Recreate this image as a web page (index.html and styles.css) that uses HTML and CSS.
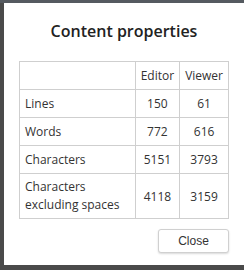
FILE: index.html
```html
<!DOCTYPE html>
<html lang="en">
<head>
    <title>Content properties</title>
    <link rel="stylesheet" href="styles.css">
</head>
<body>
    <div class="backdrop-strip"></div>
    <div class="dialog">
      <h2 class="dialog-title">Content properties</h2>

      <table class="props">
        <tr>
          <th></th>
          <th>Editor</th>
          <th>Viewer</th>
        </tr>
        <tr>
          <td class="label">Lines</td>
          <td>150</td>
          <td>61</td>
        </tr>
        <tr>
          <td class="label">Words</td>
          <td>772</td>
          <td>616</td>
        </tr>
        <tr>
          <td class="label">Characters</td>
          <td>5151</td>
          <td>3793</td>
        </tr>
        <tr class="tall">
          <td class="label">Characters excluding spaces</td>
          <td>4118</td>
          <td>3159</td>
        </tr>
      </table>

      <div class="actions">
        <button type="button">Close</button>
      </div>
    </div>
</body>
</html>
```

FILE: styles.css
```css
body {
  margin: 0;
  background-color: #4a4a4a;
  font-family: "Open Sans", "Noto Sans", sans-serif;
  overflow: hidden;
}

.backdrop-strip {
  height: 3px;
  background-color: #555a60;
}

.dialog {
  margin-left: 4px;
  width: 242px;
  height: 262px;
  box-sizing: border-box;
  padding: 16px 17px 0 15px;
  background-color: #fff;
  color: #222;
}

.dialog-title {
  margin: 0;
  font-size: 16px;
  font-weight: 600;
  line-height: 24px;
  text-align: center;
  color: #222;
}

.props {
  margin-top: 18px;
  width: 210px;
  border-collapse: collapse;
  font-size: 12px;
  color: #333;
}

.props th,
.props td {
  border: 1px solid #cfcfcf;
  height: 27px;
  padding: 0 5px;
  text-align: center;
  font-weight: normal;
}

.props th:first-child {
  width: 108px;
}

.props td.label {
  text-align: left;
  line-height: 18px;
}

.props tr.tall td {
  height: 44px;
}

.actions {
  display: flex;
  justify-content: flex-end;
  margin-top: 10px;
}

button {
  width: 71px;
  height: 24px;
  background-color: #fff;
  border: 1px solid #d0d0d0;
  border-radius: 3px;
  box-shadow: 0 1px 2px rgba(0, 0, 0, 0.15);
  font-family: "Liberation Sans", Arial, sans-serif;
  font-size: 12px;
  color: #333;
}
```
